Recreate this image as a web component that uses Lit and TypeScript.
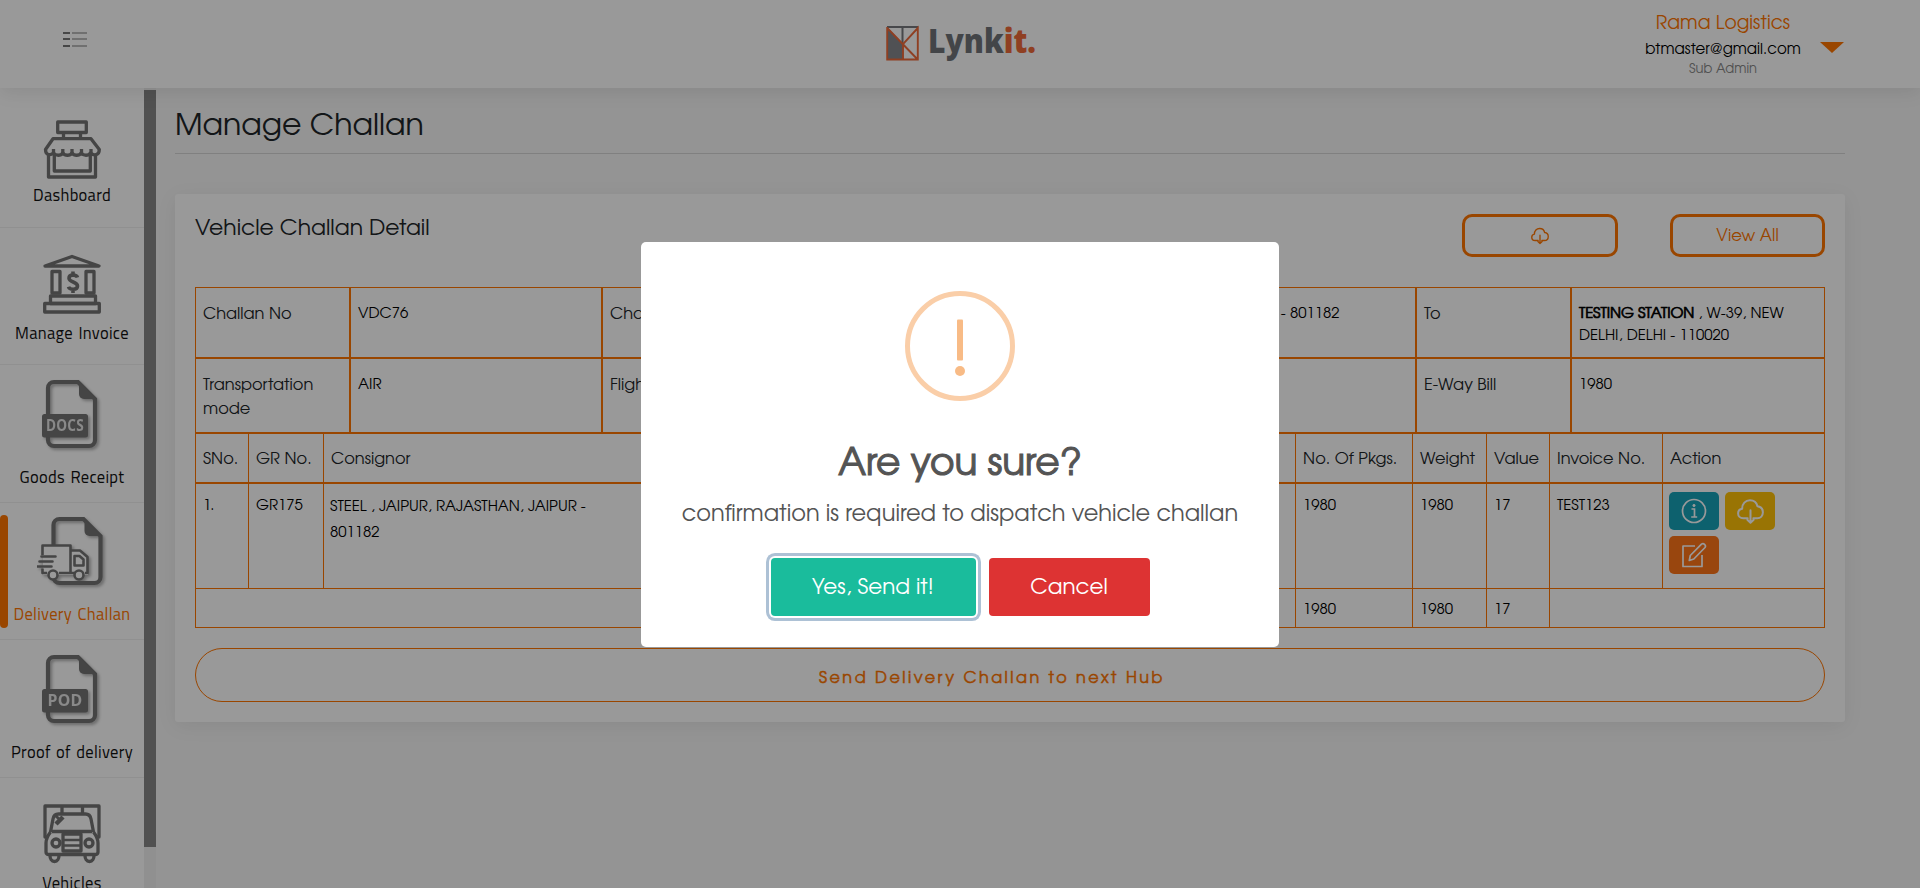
import { LitElement, html, css, svg } from "lit";
import { customElement } from "lit/decorators.js";

const docShape = svg`
  <path d="M6 12a6 6 0 0 1 6-6h24l17 17v41a6 6 0 0 1-6 6H12a6 6 0 0 1-6-6z" fill="none" stroke="#737373" stroke-width="4.2"/>
  <path d="M37 6v12a5 5 0 0 0 5 5H54z" fill="#737373"/>`;

const fileIcon = (label: string, width: number, size: number) => html`
  <svg class="shadowed" width="60" height="74" viewBox="0 0 60 74">
    ${docShape}
    <rect x="0" y="38" width="46" height="23.500" rx="2.500" fill="#737373"/>
    <text x="23" y="55.200" text-anchor="middle" textLength=${width} lengthAdjust="spacingAndGlyphs"
      font-family="Open Sans, sans-serif" font-weight="700" font-size=${size} fill="#e4e4e4">${label}</text>
  </svg>`;

const shopIcon = html`
  <svg width="58" height="60" viewBox="0 0 58 60" fill="none" stroke="#737373" stroke-width="3.300" stroke-linejoin="round">
    <rect x="14.700" y="2" width="28.600" height="10.500"/>
    <path d="M20.500 12.500v6M37.500 12.500v6"/>
    <path d="M10 18.700h38l8.300 10.800c0 6-5.400 6.500-8.800 3.500-2 3-7 3-9.300 0-2 3-7 3-9.200 0-2 3-7 3-9.200 0-2 3-7 3-9.300 0-3.400 3-8 2-8-3.500z"/>
    <path d="M10.500 29v4M19.800 29v4M29 29v4M38.500 29v4M48 29v4"/>
    <path d="M5.500 35v22h47V35M11.300 35v16h36V35"/>
  </svg>`;

const bankIcon = html`
  <svg width="58" height="60" viewBox="0 0 58 60" fill="none" stroke="#737373" stroke-width="3.300" stroke-linejoin="round">
    <path d="M2 12L29 2.500 56 12z"/>
    <rect x="9" y="17.500" width="8" height="21.500"/>
    <rect x="43" y="17.500" width="8" height="21.500"/>
    <rect x="7.500" y="42" width="45" height="7.500"/>
    <rect x="1.700" y="49.500" width="54.600" height="8.500"/>
    <path d="M34.500 23.500c-1-3-8.500-3.500-8.500.8s8.500 3.200 8.500 7.700-8 4-9 .8M30 17.500v3.500M30 35v4" stroke-width="3.600"/>
  </svg>`;

const deliveryIcon = html`
  <svg class="shadowed" width="70" height="74" viewBox="0 0 70 74">
    <g transform="translate(10.500 0)">${docShape}</g>
    <path d="M6 32h28v30H6z" fill="#fff"/>
    <path d="M34 38h9l8 7v17H34z" fill="#fff"/>
    <g fill="none" stroke="#737373" stroke-width="2.600" stroke-linejoin="round">
      <path d="M5.500 42v-9.500h28V60h8M5.500 55.500V60h4.500M22 60h12"/>
      <path d="M33.500 37.500h9.500l7.500 6.500v16H48" />
      <path d="M37.500 43h5l4 3.500v6h-9z"/>
      <path d="M4.500 43.500h14M2.500 48.500h13M.500 53.500h14" stroke-linecap="round"/>
      <circle cx="16" cy="62" r="4.500" fill="#fff"/>
      <circle cx="42" cy="62" r="4.500" fill="#fff"/>
    </g>
  </svg>`;

const truckIcon = html`
  <svg width="58" height="60" viewBox="0 0 58 60" fill="none" stroke="#737373" stroke-width="3.300" stroke-linejoin="round">
    <path d="M5 33H2V2h54v31h-3M19 2v8M39.500 2v8"/>
    <path d="M7.500 28l2.500-13q1-5 5.500-5h27q4.500 0 5.500 5L50.500 28M9 27.500h40M7.500 28Q3 34 3 39v9q0 2.500 3 2.500h46q3 0 3-2.500v-9q0-5-4.500-11"/>
    <rect x="20" y="30" width="18" height="17"/>
    <path d="M20 36h18M20 41.500h18" stroke-width="2.600"/>
    <circle cx="13" cy="39" r="4"/><circle cx="46" cy="39" r="4"/>
    <path d="M7 51.500c0 3 1.500 6 4.500 6s4.500-3 4.500-6M42 51.500c0 3 1.500 6 4.500 6s4.500-3 4.500-6"/>
    <path d="M13 20l7-7M13.500 14.500l2-2" stroke-width="4.500"/>
  </svg>`;

const cloudIcon = (size: number) => html`
  <svg width=${size} height=${size} viewBox="0 0 24 24" fill="none" stroke="currentColor" stroke-width="1.800" stroke-linejoin="round" stroke-linecap="round">
    <path d="M9.500 18H5.500C2.800 18 1 16 1 13.700c0-2.200 1.600-3.900 3.600-4.200C4.500 5 7.500 2 11.500 2c3.600 0 6 2.300 6.700 5.300 2.900.4 4.800 2.500 4.800 5.300 0 3-2 5.400-5 5.400h-3.500"/>
    <path d="M12 11v11M9.200 19.400l2.800 2.700 2.800-2.700"/>
  </svg>`;

const infoIcon = html`
  <svg width="26" height="26" viewBox="0 0 26 26" fill="none" stroke="currentColor" stroke-width="1.700">
    <circle cx="13" cy="13" r="11.500"/>
    <path d="M10.500 11h3v8M10.200 19h6"/>
    <circle cx="13" cy="7.500" r="1.100" fill="currentColor" stroke-width="1"/>
  </svg>`;

const editIcon = html`
  <svg width="26" height="26" viewBox="0 0 26 26" fill="none" stroke="currentColor" stroke-width="1.700" stroke-linejoin="round">
    <path d="M14 4H2v20.500h19V13"/>
    <path d="M8.300 18.500l1-5L20.500 2.200c2-1.600 5 1 3.500 3.300L12.800 17z"/>
  </svg>`;

const menu = [
  { label: "Dashboard", icon: shopIcon, cls: "short first" },
  { label: "Manage Invoice", icon: bankIcon, cls: "short" },
  { label: "Goods Receipt", icon: fileIcon("DOCS", 38, 15.3), cls: "tall" },
  { label: "Delivery Challan", icon: deliveryIcon, cls: "tall active" },
  { label: "Proof of delivery", icon: fileIcon("POD", 35, 16), cls: "tall" },
  { label: "Vehicles", icon: truckIcon, cls: "short last" },
];

@customElement("app-root")
export class AppRoot extends LitElement {
  static styles = css`
    :host {
      display: flex;
      flex-direction: column;
      height: 888px;
      overflow: hidden;
      background: #f7f7f7;
      color: #212529;
      font-family: "Century Gothic", "URW Gothic", "TeX Gyre Adventor", Lato, sans-serif;
      font-size: 16px;
    }
    * { box-sizing: border-box; }
    svg { display: block; }
    .header {
      height: 88px;
      flex: none;
      background: #fff;
      box-shadow: 0 4px 18px rgba(0, 0, 0, .09);
      display: grid;
      grid-template-columns: 1fr auto 1fr;
      z-index: 2;
    }
    .burger { padding: 32px 0 0 63px; }
    .logo { display: flex; padding: 25px 0 0 2px; }
    .wordmark { margin-left: 8px; overflow: visible; }
    .account { display: flex; justify-content: flex-end; }
    .who { text-align: center; padding-top: 12px; width: 170px; }
    .company { color: #ff7500; font-size: 18.800px; line-height: 24px; }
    .email { color: #000; font-size: 15px; line-height: 28px; }
    .role { color: #888; font-size: 13px; line-height: 11px; }
    .caret {
      margin: 42px 76px 0 12px;
      width: 0; height: 0;
      border: 12.500px solid transparent;
      border-top: 11.500px solid #ff7500;
      border-bottom: 0;
    }
    .body { display: flex; flex: 1; min-height: 0; }
    .side { width: 144px; background: #fff; overflow: hidden; padding-top: 2px; }
    .item {
      height: 137.500px;
      border-bottom: 1px solid #f0f0f0;
      display: flex;
      flex-direction: column;
      align-items: center;
      justify-content: space-between;
      color: #111;
      font-family: "Titillium Web", "Exo 2", Roboto, sans-serif;
      font-size: 16.500px;
      letter-spacing: .3px;
      word-spacing: 1.500px;
      line-height: 22px;
      white-space: nowrap;
      position: relative;
    }
    .item.short { padding: 26px 0 20px; }
    .item.short.first { padding: 30px 0 21px; }
    .item.tall { padding: 10.500px 0 14px; }
    .item.short.last { padding: 26px 0 20px; }
    .shadowed { filter: drop-shadow(2px 2px 1.500px rgba(0, 0, 0, .3)); }
    .active { color: #ff7500; }
    .active::before {
      content: "";
      position: absolute;
      left: 0; top: 12px;
      width: 8px; height: 113px;
      background: #ff7500;
      border-radius: 4px;
    }
    .track { width: 12px; background: #f1f1f1; padding-top: 2px; }
    .thumb { height: 757px; background: #878787; }
    .main { flex: 1; padding: 15px 75px 0 19px; }
    h1 {
      margin: 0; height: 51px; padding-top: 3px;
      font-size: 30px; font-weight: 400; line-height: 42px;
      border-bottom: 1px solid #d6d6d6;
    }
    .card {
      margin-top: 40px;
      height: 528px;
      padding: 20px;
      background: #fff;
      border-radius: 3px;
      box-shadow: 0 4px 20px rgba(0, 0, 0, .07);
    }
    .top { display: flex; height: 73px; }
    h2 { margin: 0; flex: 1; padding-top: 2px; font-size: 21.900px; font-weight: 400; line-height: 27px; }
    .outline {
      width: 156px; height: 43px;
      border: 3px solid #ff7500;
      border-radius: 10px;
      color: #ff7500;
      display: flex; align-items: center; justify-content: center;
      font-size: 16.500px;
    }
    .outline + .outline { width: 155px; margin-left: 52px; padding-top: 2px; }
    .facts {
      display: grid;
      grid-template-columns: 155px 252px 155px 180px 84px 395px 155px 254px;
      grid-template-rows: 71px 75px;
    }
    .facts > div { border: 1px solid #ff7500; padding: 15px 7px 0; overflow: hidden; }
    .facts .k { font-size: 16.200px; line-height: 24px; }
    .facts .v { font-size: 14.900px; line-height: 22px; color: #000; }
    .facts .v.nowrap { white-space: nowrap; padding-left: 8px; }
    .strong { -webkit-text-stroke: .7px currentColor; letter-spacing: -.1px; }
    .row {
      display: grid;
      grid-template-columns: 53px 75px 330px 306px 336px 117px 74px 63px 113px 1fr;
      border: 1px solid #ff7500;
      font-size: 14.900px;
      line-height: 22px;
      color: #000;
    }
    .row > div { border-right: 1px solid #ff7500; padding: 11px 6px 0 7px; white-space: nowrap; }
    .row > div:last-child { border-right: 0; }
    .row.head { height: 50px; color: #212529; font-size: 16.200px; }
    .row.head > div { padding-top: 15px; }
    .row.data { height: 106px; }
    .row.data .wide { white-space: normal; line-height: 26px; padding: 10px 50px 0 6px; }
    .row.foot { height: 39px; border-top: 0; }
    .row.foot > div { padding-top: 10px; }
    .row.foot > div:first-child { grid-column: span 5; }
    .row.foot > div:last-child { grid-column: span 2; }
    .row > .acts { display: flex; flex-wrap: wrap; gap: 6px; align-content: flex-start; padding: 8px 6px 0 6px; }
    .act {
      width: 50px; height: 38px;
      border-radius: 5px;
      color: #fff;
      display: flex; align-items: center; justify-content: center;
    }
    .info { background: #17a2b8; }
    .save { background: #ffc107; }
    .edit { background: #ff7518; }
    .send {
      margin-top: 20px;
      height: 54px;
      padding-right: 36px;
      border: 1px solid #ff7500;
      border-radius: 27px;
      color: #ff7500;
      font-size: 16px;
      -webkit-text-stroke: .5px currentColor;
      letter-spacing: 2.500px;
      line-height: 59px;
      text-align: center;
    }
    .overlay {
      position: fixed;
      inset: 0;
      z-index: 10;
      background: rgba(0, 0, 0, .4);
      display: flex;
      align-items: center;
      justify-content: center;
    }
    .modal {
      width: 638px; height: 405px;
      background: #fff;
      border-radius: 5px;
      display: flex;
      flex-direction: column;
      align-items: center;
      padding-top: 49px;
      color: #545454;
      white-space: nowrap;
    }
    .title { margin-top: 36px; font-size: 37.500px; -webkit-text-stroke: 1.100px currentColor; line-height: 56px; }
    .text { font-size: 22.500px; line-height: 30px; margin-top: 7px; }
    .buttons { display: flex; gap: 13px; margin-top: 28px; }
    .btn {
      height: 58px;
      border-radius: 4px;
      color: #fff;
      font-size: 21.500px;
      line-height: 60px;
      text-align: center;
    }
    .yes { width: 205px; background: #1abc9c; box-shadow: 0 0 0 2px #fff, 0 0 0 5px rgba(50, 100, 150, .4); }
    .no { width: 161px; background: #dd3333; }
  `;

  render() {
    return html`
      <div class="header">
        <div class="burger">
          <svg width="25" height="16" viewBox="0 0 25 16">
            <path d="M0 1h7M0 7h7M0 14h7" stroke="#777" stroke-width="1.800"/>
            <path d="M9 1h15M9 7h15M9 14h15" stroke="#bbb" stroke-width="1.800"/>
          </svg>
        </div>
        <div class="logo">
          <svg width="34" height="36" viewBox="0 0 34 36" fill="none">
            <path d="M1 2l16 17v15H1z" fill="#85888c"/>
            <path d="M1 2h31M16.500 2v17" stroke="#77797d" stroke-width="2"/>
            <path d="M1.200 2v32.500h30.600V3L17 19v15M1.200 3l30 31" stroke="#ee6939" stroke-width="1.900"/>
          </svg>
          <svg class="wordmark" width="108" height="44" viewBox="0 0 108 44" font-family="Open Sans, sans-serif" font-weight="800" font-size="34">
            <text x="0" y="27.500" textLength="108" lengthAdjust="spacingAndGlyphs" fill="#707378">Lynk<tspan fill="#ee6939">it.</tspan></text>
          </svg>
        </div>
        <div class="account">
          <div class="who">
            <div class="company">Rama Logistics</div>
            <div class="email">btmaster@gmail.com</div>
            <div class="role">Sub Admin</div>
          </div>
          <div class="caret"></div>
        </div>
      </div>
      <div class="body">
        <div class="side">
          ${menu.map((m) => html`<div class="item ${m.cls}">${m.icon}<span>${m.label}</span></div>`)}
        </div>
        <div class="track"><div class="thumb"></div></div>
        <div class="main">
          <h1>Manage Challan</h1>
          <div class="card">
            <div class="top">
              <h2>Vehicle Challan Detail</h2>
              <div class="outline">${cloudIcon(18)}</div>
              <div class="outline">View All</div>
            </div>
            <div class="facts">
              <div class="k">Challan No</div><div class="v">VDC76</div>
              <div class="k">Challan Date</div><div class="v"></div>
              <div class="k">From</div><div class="v nowrap">STEEL , JAIPUR, RAJASTHAN, JAIPUR - 801182</div>
              <div class="k">To</div><div class="v"><span class="strong">TESTING STATION</span> , W-39, NEW DELHI, DELHI - 110020</div>
              <div class="k">Transportation mode</div><div class="v">AIR</div>
              <div class="k">Flight No</div><div class="v"></div>
              <div class="k"></div><div class="v"></div>
              <div class="k">E-Way Bill</div><div class="v">1980</div>
            </div>
            <div class="row head">
              <div>SNo.</div><div>GR No.</div><div>Consignor</div><div></div><div></div>
              <div>No. Of Pkgs.</div><div>Weight</div><div>Value</div><div>Invoice No.</div><div>Action</div>
            </div>
            <div class="row data">
              <div>1.</div><div>GR175</div>
              <div class="wide">STEEL , JAIPUR, RAJASTHAN, JAIPUR - 801182</div><div></div><div></div>
              <div>1980</div><div>1980</div><div>17</div><div>TEST123</div>
              <div class="acts">
                <span class="act info">${infoIcon}</span>
                <span class="act save">${cloudIcon(27)}</span>
                <span class="act edit">${editIcon}</span>
              </div>
            </div>
            <div class="row foot">
              <div></div><div>1980</div><div>1980</div><div>17</div><div></div>
            </div>
            <div class="send">Send Delivery Challan to next Hub</div>
          </div>
        </div>
      </div>
      <div class="overlay">
        <div class="modal">
          <svg width="110" height="110" viewBox="0 0 110 110">
            <circle cx="55" cy="55" r="52.500" fill="none" stroke="#facea8" stroke-width="5"/>
            <rect x="52" y="28.500" width="6" height="41" rx="1" fill="#f8bb86"/>
            <circle cx="55" cy="80" r="5" fill="#f8bb86"/>
          </svg>
          <div class="title">Are you sure?</div>
          <div class="text">confirmation is required to dispatch vehicle challan</div>
          <div class="buttons">
            <div class="btn yes">Yes, Send it!</div>
            <div class="btn no">Cancel</div>
          </div>
        </div>
      </div>
    `;
  }
}
